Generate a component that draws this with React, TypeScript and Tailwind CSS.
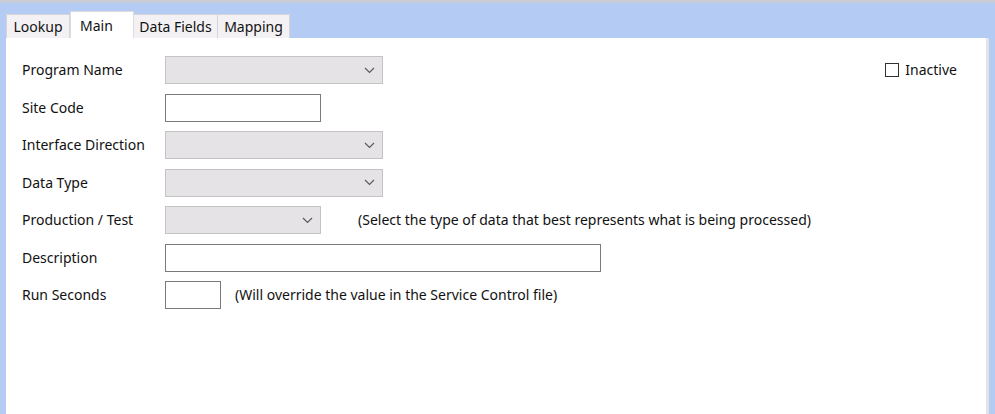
import React from "react";

const font = { fontFamily: '"Noto Sans", "Open Sans", sans-serif' };

function Chevron() {
  return (
    <svg width="11" height="7" viewBox="0 0 11 7" className="block">
      <path d="M1 1 L5.5 5.5 L10 1" fill="none" stroke="#5a5a5a" strokeWidth="1.2" />
    </svg>
  );
}

function Select({ w }: { w: string }) {
  return (
    <div className={`${w} h-[28px] bg-[#e6e3e7] border border-[#c3c3c3] flex items-center justify-end pr-[7px]`}>
      <Chevron />
    </div>
  );
}

function Input({ w }: { w: string }) {
  return <div className={`${w} h-[28px] bg-white border border-[#7a7a7a]`} />;
}

function Label({ children }: { children: React.ReactNode }) {
  return <div className="w-[143px] shrink-0 text-[14px] text-[#111] leading-none">{children}</div>;
}

function Hint({ children, ml }: { children: React.ReactNode; ml: string }) {
  return <div className={`${ml} text-[14px] text-[#111] leading-none`}>{children}</div>;
}

export default function App() {
  return (
    <div
      className="w-[995px] h-[414px] flex flex-col bg-[#b4ccf4] border-t-[3px] border-[#c9cbd6] pt-[8px] overflow-hidden"
      style={font}
    >
      <div className="flex items-end h-[27px] pl-[6px]">
        <div className="h-[24px] w-[64px] bg-[#f3f1f4] border border-b-0 border-[#d6d6d9] flex items-center justify-center text-[14px] text-[#111]">
          Lookup
        </div>
        <div className="h-[27px] w-[64px] bg-white border border-b-0 border-[#dcdce0] flex items-start justify-start pl-[9px] pt-[3px] text-[14px] text-[#111]">
          Main
        </div>
        <div className="h-[24px] w-[84px] bg-[#f3f1f4] border border-b-0 border-l-0 border-[#d6d6d9] flex items-center justify-center text-[14px] text-[#111]">
          Data Fields
        </div>
        <div className="h-[24px] w-[72px] bg-[#f3f1f4] border border-b-0 border-l-0 border-[#d6d6d9] flex items-center justify-center text-[14px] text-[#111]">
          Mapping
        </div>
      </div>
      <div className="flex-1 ml-[6px] mr-[6px] bg-white border-r-[3px] border-[#e4e4e6] pt-[18px] pl-[16px] pr-[29px]">
        <div className="flex flex-col gap-[9.5px]">
          <div className="flex items-center h-[28px]">
            <Label>Program Name</Label>
            <Select w="w-[218px]" />
            <div className="ml-auto flex items-center">
              <div className="w-[14px] h-[14px] border border-[#333] bg-white mr-[6px]" />
              <span className="text-[14px] text-[#111] leading-none">Inactive</span>
            </div>
          </div>
          <div className="flex items-center h-[28px]">
            <Label>Site Code</Label>
            <Input w="w-[156px]" />
          </div>
          <div className="flex items-center h-[28px]">
            <Label>Interface Direction</Label>
            <Select w="w-[218px]" />
          </div>
          <div className="flex items-center h-[28px]">
            <Label>Data Type</Label>
            <Select w="w-[218px]" />
          </div>
          <div className="flex items-center h-[28px]">
            <Label>Production / Test</Label>
            <Select w="w-[156px]" />
            <Hint ml="ml-[37px]">(Select the type of data that best represents what is being processed)</Hint>
          </div>
          <div className="flex items-center h-[28px]">
            <Label>Description</Label>
            <Input w="w-[436px]" />
          </div>
          <div className="flex items-center h-[28px]">
            <Label>Run Seconds</Label>
            <Input w="w-[56px]" />
            <Hint ml="ml-[14px]">(Will override the value in the Service Control file)</Hint>
          </div>
        </div>
      </div>
    </div>
  );
}
